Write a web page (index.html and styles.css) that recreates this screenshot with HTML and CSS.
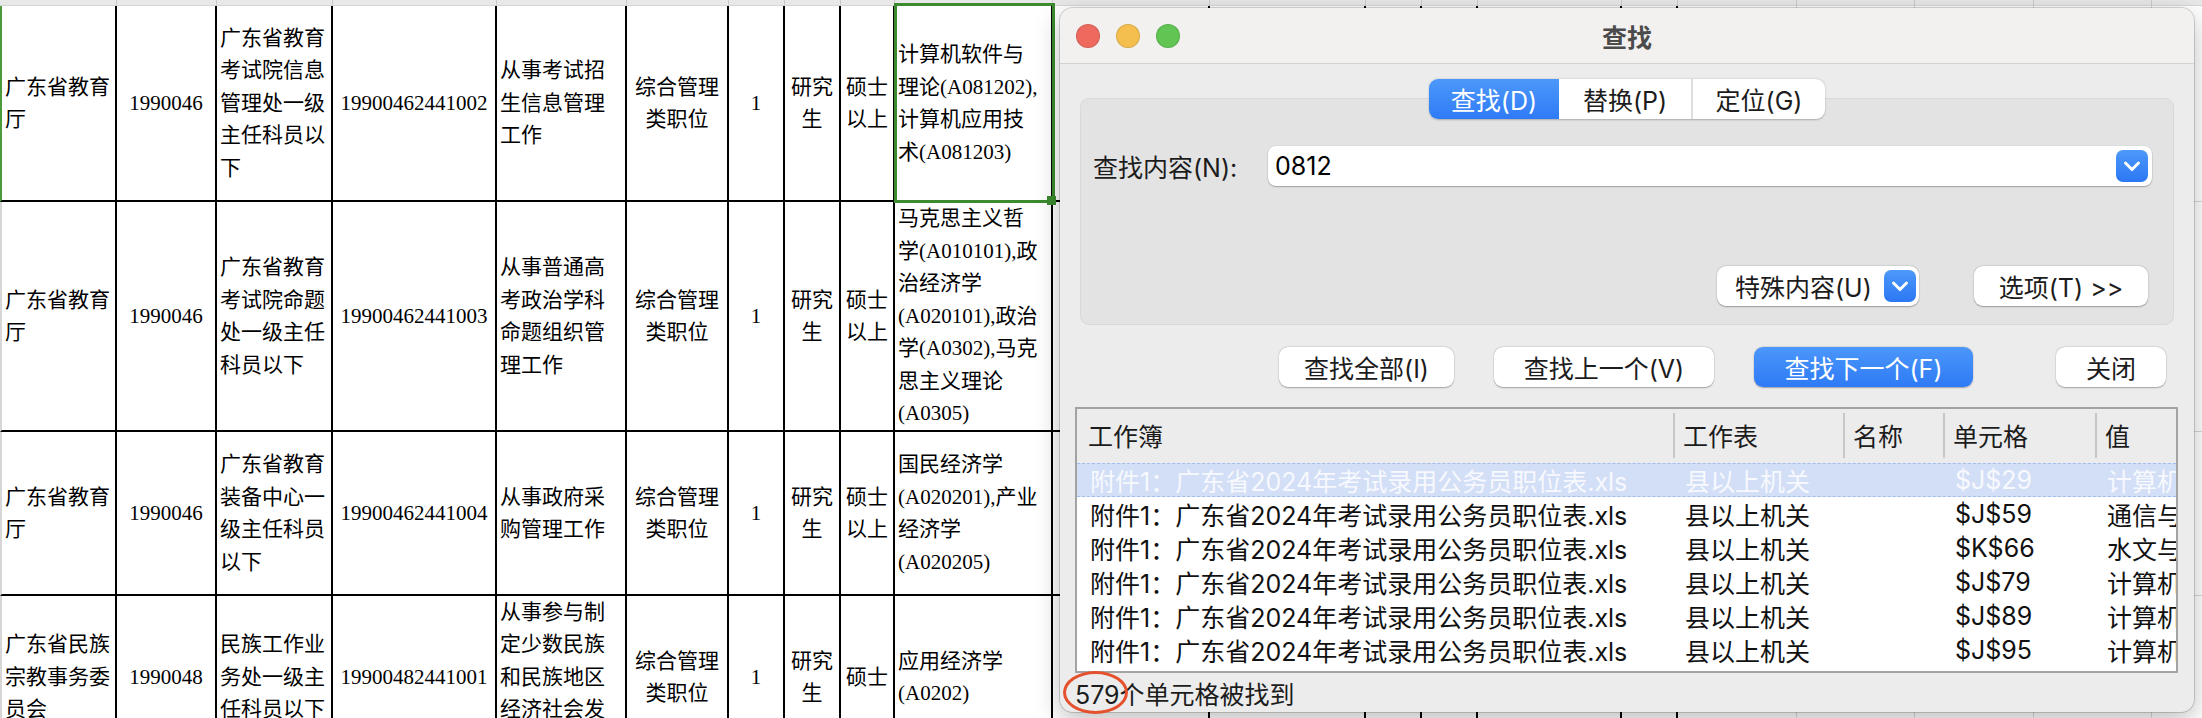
FILE: index.html
```html
<!DOCTYPE html>
<html lang="zh-CN">
<head>
<meta charset="utf-8">
<title>查找</title>
<link rel="stylesheet" href="styles.css">
</head>
<body>
<div class="screen">
  <div class="sheet">
    <div class="s"></div><div class="s"></div><div class="s"></div><div class="s"></div><div class="s"></div><div class="s"></div><div class="s"></div>
    <div class="s"></div><div class="s"></div><div class="s"></div><div class="s"></div><div class="s"></div><div class="s"></div><div class="s"></div>
    <div class="s"></div><div class="s"></div><div class="s"></div><div class="s"></div><div class="s"></div><div class="s"></div><div class="s"></div>

    <div class="c l f hl">广东省教育<br>厅</div>
    <div class="c m">1990046</div>
    <div class="c l">广东省教育<br>考试院信息<br>管理处一级<br>主任科员以<br>下</div>
    <div class="c m">19900462441002</div>
    <div class="c l">从事考试招<br>生信息管理<br>工作</div>
    <div class="c m">综合管理<br>类职位</div>
    <div class="c m">1</div>
    <div class="c m">研究<br>生</div>
    <div class="c m">硕士<br>以上</div>
    <div class="c l">计算机软件与<br>理论(A081202),<br>计算机应用技<br>术(A081203)</div>
    <div class="c"></div><div class="c"></div><div class="c"></div><div class="c"></div><div class="c"></div><div class="c"></div>
    <div class="c g"></div><div class="c g"></div><div class="c g"></div><div class="c g"></div><div class="c g"></div>

    <div class="c l f">广东省教育<br>厅</div>
    <div class="c m">1990046</div>
    <div class="c l">广东省教育<br>考试院命题<br>处一级主任<br>科员以下</div>
    <div class="c m">19900462441003</div>
    <div class="c l">从事普通高<br>考政治学科<br>命题组织管<br>理工作</div>
    <div class="c m">综合管理<br>类职位</div>
    <div class="c m">1</div>
    <div class="c m">研究<br>生</div>
    <div class="c m">硕士<br>以上</div>
    <div class="c l">马克思主义哲<br>学(A010101),政<br>治经济学<br>(A020101),政治<br>学(A0302),马克<br>思主义理论<br>(A0305)</div>
    <div class="c"></div><div class="c"></div><div class="c"></div><div class="c"></div><div class="c"></div><div class="c"></div>
    <div class="c g"></div><div class="c g"></div><div class="c g"></div><div class="c g"></div><div class="c g"></div>

    <div class="c l f">广东省教育<br>厅</div>
    <div class="c m">1990046</div>
    <div class="c l">广东省教育<br>装备中心一<br>级主任科员<br>以下</div>
    <div class="c m">19900462441004</div>
    <div class="c l">从事政府采<br>购管理工作</div>
    <div class="c m">综合管理<br>类职位</div>
    <div class="c m">1</div>
    <div class="c m">研究<br>生</div>
    <div class="c m">硕士<br>以上</div>
    <div class="c l">国民经济学<br>(A020201),产业<br>经济学<br>(A020205)</div>
    <div class="c"></div><div class="c"></div><div class="c"></div><div class="c"></div><div class="c"></div><div class="c"></div>
    <div class="c g"></div><div class="c g"></div><div class="c g"></div><div class="c g"></div><div class="c g"></div>

    <div class="c l f">广东省民族<br>宗教事务委<br>员会</div>
    <div class="c m">1990048</div>
    <div class="c l">民族工作业<br>务处一级主<br>任科员以下</div>
    <div class="c m">19900482441001</div>
    <div class="c l">从事参与制<br>定少数民族<br>和民族地区<br>经济社会发<br>展研究工作</div>
    <div class="c m">综合管理<br>类职位</div>
    <div class="c m">1</div>
    <div class="c m">研究<br>生</div>
    <div class="c m">硕士</div>
    <div class="c l">应用经济学<br>(A0202)</div>
    <div class="c"></div><div class="c"></div><div class="c"></div><div class="c"></div><div class="c"></div><div class="c"></div>
    <div class="c g"></div><div class="c g"></div><div class="c g"></div><div class="c g"></div><div class="c g"></div>
  </div>

  <div class="selbox"></div>
  <div class="handle"></div>

  <div class="dialog">
    <div class="titlebar">
      <div class="lights">
        <span class="light red"></span>
        <span class="light yellow"></span>
        <span class="light green"></span>
      </div>
      <div class="title">查找</div>
      <div></div>
    </div>

    <div class="tabs">
      <div class="tab on t1">查找(D)</div>
      <div class="tab t2">替换(P)</div>
      <div class="tab t3">定位(G)</div>
    </div>

    <div class="group">
      <div class="findrow">
        <span class="label">查找内容(N):</span>
        <div class="input">
          <span>0812</span>
          <span class="dd"><svg width="32" height="32" viewBox="0 0 32 32"><polyline points="9.5,13 16,19.5 22.5,13" fill="none" stroke="#fff" stroke-width="3" stroke-linecap="round" stroke-linejoin="round"/></svg></span>
        </div>
      </div>
      <div class="optrow">
        <div class="btn popup">
          <span>特殊内容(U)</span>
          <span class="dd"><svg width="32" height="32" viewBox="0 0 32 32"><polyline points="9.5,13 16,19.5 22.5,13" fill="none" stroke="#fff" stroke-width="3" stroke-linecap="round" stroke-linejoin="round"/></svg></span>
        </div>
        <div class="btn opts">选项(T) &gt;&gt;</div>
      </div>
    </div>

    <div class="actions">
      <div class="btn b1">查找全部(I)</div>
      <div class="btn b2">查找上一个(V)</div>
      <div class="btn primary b3">查找下一个(F)</div>
      <div class="btn b4">关闭</div>
    </div>

    <div class="list">
      <div class="lhead">
        <div class="h">工作簿</div>
        <div class="h sep">工作表</div>
        <div class="h sep">名称</div>
        <div class="h sep">单元格</div>
        <div class="h sep">值</div>
      </div>
      <div class="lrows">
        <div class="lr sel"><span>附件1：广东省2024年考试录用公务员职位表.xls</span><span>县以上机关</span><span></span><span>$J$29</span><span>计算机软件与理论</span></div>
        <div class="lr"><span>附件1：广东省2024年考试录用公务员职位表.xls</span><span>县以上机关</span><span></span><span>$J$59</span><span>通信与信息系统</span></div>
        <div class="lr"><span>附件1：广东省2024年考试录用公务员职位表.xls</span><span>县以上机关</span><span></span><span>$K$66</span><span>水文与水资源</span></div>
        <div class="lr"><span>附件1：广东省2024年考试录用公务员职位表.xls</span><span>县以上机关</span><span></span><span>$J$79</span><span>计算机科学</span></div>
        <div class="lr"><span>附件1：广东省2024年考试录用公务员职位表.xls</span><span>县以上机关</span><span></span><span>$J$89</span><span>计算机科学</span></div>
        <div class="lr"><span>附件1：广东省2024年考试录用公务员职位表.xls</span><span>县以上机关</span><span></span><span>$J$95</span><span>计算机科学</span></div>
        <div class="lr"><span>附件1：广东省2024年考试录用公务员职位表.xls</span><span>县以上机关</span><span></span><span>$J$103</span><span>计算机科学</span></div>
      </div>
    </div>

    <div class="status">579个单元格被找到</div>
  </div>

  <div class="mark"></div>
</div>
</body>
</html>
```

FILE: styles.css
```css
html, body {
  margin: 0;
  padding: 0;
  background: #ffffff;
}

.screen {
  position: relative;
  width: 2202px;
  height: 718px;
  overflow: hidden;
  font-family: "Liberation Serif", "Noto Sans CJK SC", serif;
  color: #000;
}

/* ---------- spreadsheet ---------- */
.sheet {
  display: grid;
  grid-template-columns: 117px 100px 116px 164px 130px 102px 56px 56px 54px 158px 157px 156px 56px 56px 144px 56px 119px 118px 119px 118px 100px;
  grid-template-rows: 6px 196px 230px 164px 164px;
  width: max-content;
  background: #fff;
}

.s {
  box-sizing: border-box;
  background: #e8e8e8;
  border-right: 1px solid #c9c9c9;
  border-bottom: 1px solid #d6d6d6;
}

.c {
  box-sizing: border-box;
  border-right: 2px solid #000;
  border-bottom: 2px solid #000;
  display: flex;
  align-items: center;
  font-size: 21px;
  line-height: 32.5px;
  white-space: nowrap;
  overflow: hidden;
  padding: 0 3px;
}

.c.m {
  justify-content: center;
  text-align: center;
  padding: 0;
}

.c.f {
  border-left: 2px solid #d6d6d6;
}

.c.f.hl {
  border-left-color: #4b9a3c;
}

.c.g {
  border-right: 1px solid #dadada;
  border-bottom: 1px solid #dadada;
}

.selbox {
  position: absolute;
  left: 894px;
  top: 3px;
  width: 161px;
  height: 200px;
  box-sizing: border-box;
  border: 3px solid #3c8b2f;
}

.handle {
  position: absolute;
  left: 1047px;
  top: 196px;
  width: 9px;
  height: 9px;
  background: #3c8b2f;
}

/* ---------- dialog ---------- */
.dialog {
  position: absolute;
  left: 1060px;
  top: 8px;
  width: 1134px;
  height: 704px;
  box-sizing: border-box;
  background: #ececec;
  border-radius: 13px;
  box-shadow: 0 0 0 1px rgba(0, 0, 0, 0.16), 0 8px 26px rgba(0, 0, 0, 0.26);
  display: flex;
  flex-direction: column;
  overflow: hidden;
  font-family: "Inter", "Noto Sans CJK SC", sans-serif;
  font-size: 25px;
  color: #1c1c1c;
}

.titlebar {
  height: 55px;
  flex: none;
  border-bottom: 1px solid #d3d3d3;
  background: #f2f1f0;
  display: grid;
  grid-template-columns: 1fr auto 1fr;
  align-items: center;
  padding: 0 16px;
}

.lights {
  display: flex;
  gap: 16px;
}

.light {
  width: 24px;
  height: 24px;
  border-radius: 50%;
  box-sizing: border-box;
  border: 1px solid rgba(0, 0, 0, 0.12);
}

.red { background: #ee6a5f; }
.yellow { background: #f5bf4f; }
.green { background: #61c554; }

.title {
  font-family: "Noto Sans CJK SC", sans-serif;
  font-weight: 700;
  font-size: 25px;
  color: #4b4b4b;
}

.tabs {
  align-self: center;
  flex: none;
  display: flex;
  margin-top: 15px;
  height: 40px;
  border-radius: 9px;
  background: #fff;
  box-shadow: 0 0.5px 2px rgba(0, 0, 0, 0.25);
  position: relative;
  z-index: 1;
}

.tab {
  display: flex;
  align-items: center;
  justify-content: center;
  box-sizing: border-box;
}

.t1 { width: 130px; }
.t2 { width: 132px; }
.t3 { width: 134px; border-left: 2px solid #dedede; }

.tab.on {
  background: linear-gradient(#4c98fa, #2f7bf6);
  color: #fff;
  border-radius: 9px 0 0 9px;
}

.group {
  flex: none;
  margin: -21px 20px 0;
  height: 227px;
  box-sizing: border-box;
  background: #e3e3e3;
  border: 1px solid #d8d8d8;
  border-radius: 9px;
  padding: 47px 21px 0 12px;
}

.findrow {
  display: flex;
  align-items: center;
  height: 40px;
}

.input {
  margin-left: auto;
  width: 884px;
  height: 40px;
  box-sizing: border-box;
  display: flex;
  align-items: center;
  justify-content: space-between;
  padding: 0 4px 0 7px;
  background: #fff;
  border-radius: 8px;
  box-shadow: 0 1px 1.5px rgba(0, 0, 0, 0.28), 0 0 0 0.5px rgba(0, 0, 0, 0.06);
  color: #000;
}

.dd {
  width: 32px;
  height: 32px;
  border-radius: 7px;
  background: linear-gradient(#4d99fa, #2b77f4);
  display: flex;
  align-items: center;
  justify-content: center;
  flex: none;
}

.dd svg {
  display: block;
}

.optrow {
  margin-top: 80px;
  display: flex;
  justify-content: flex-end;
  gap: 55px;
  padding-right: 4px;
}

.btn {
  height: 40px;
  box-sizing: border-box;
  background: #fff;
  border-radius: 9px;
  box-shadow: 0 0.5px 1.5px rgba(0, 0, 0, 0.3), 0 0 0 0.5px rgba(0, 0, 0, 0.05);
  display: flex;
  align-items: center;
  justify-content: center;
  white-space: nowrap;
}

.popup {
  width: 202px;
  justify-content: space-between;
  padding: 0 3px 0 18px;
}

.opts { width: 174px; }

.actions {
  flex: none;
  margin-top: 22px;
  height: 40px;
  display: flex;
  justify-content: flex-end;
  gap: 40px;
  padding-right: 28px;
}

.b1 { width: 175px; }
.b2 { width: 220px; }
.b3 { width: 219px; }
.b4 { width: 110px; margin-left: 43px; }

.btn.primary {
  background: linear-gradient(#4b97fa, #2e7af5);
  color: #fff;
}

.list {
  flex: none;
  margin: 20px 16px 0 15px;
  height: 266px;
  box-sizing: border-box;
  border: 2px solid #a3a3a3;
  overflow: hidden;
}

.lhead,
.lr {
  display: grid;
  grid-template-columns: 596px 170px 100px 152px minmax(0, 1fr);
  align-items: center;
}

.lhead {
  height: 52px;
}

.h {
  height: 45px;
  box-sizing: border-box;
  display: flex;
  align-items: center;
  padding-left: 11px;
}

.h.sep {
  border-left: 2px solid #c7c7c7;
  padding-left: 8px;
}

.lrows {
  margin-top: 2px;
  background: #fff;
  height: 220px;
}

.lr {
  height: 34px;
  box-sizing: border-box;
  color: #111;
}

.lr span {
  min-width: 0;
  white-space: nowrap;
  overflow: hidden;
  padding-left: 12px;
}

.lr span:first-child {
  padding-left: 13px;
}

.lr.sel {
  background: #d3dff6;
  border-top: 1px dashed #a5bdee;
  border-bottom: 1px dashed #a5bdee;
  color: #f7f9fe;
}

.status {
  flex: none;
  height: 39px;
  display: flex;
  align-items: center;
  padding-left: 15px;
}

.mark {
  position: absolute;
  left: 1063px;
  top: 671px;
  width: 65px;
  height: 43px;
  box-sizing: border-box;
  border: 3px solid #e4512c;
  border-radius: 50%;
}
```
